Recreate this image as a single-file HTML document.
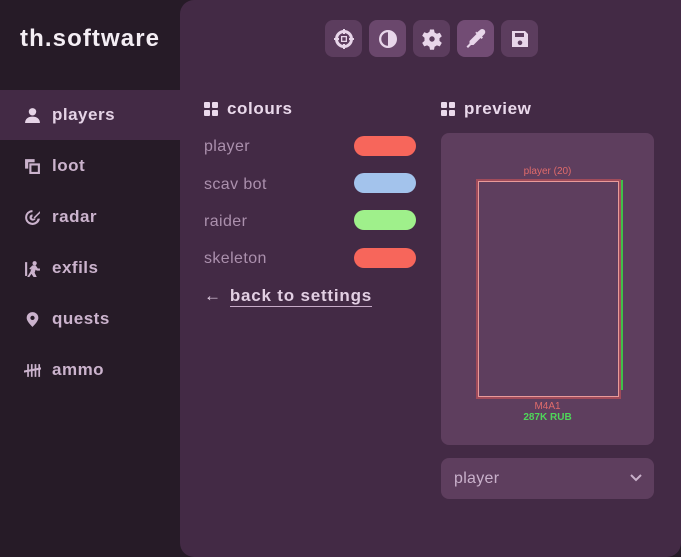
<!DOCTYPE html>
<html><head><style>
*{margin:0;padding:0;box-sizing:border-box}
body{width:681px;height:557px;background:#261b27;font-family:"Liberation Sans",sans-serif;position:relative;overflow:hidden}
.logo{position:absolute;left:20px;top:25px;font-size:24px;color:#f4eef4;font-weight:bold;letter-spacing:1.1px}
.nav{position:absolute;left:0;width:180px;height:50px;display:flex;align-items:center;padding-left:24px;color:#cbb3cd;font-size:17px;font-weight:bold;letter-spacing:0.5px}
.nav.sel{background:#432a45;color:#e5d3e6}
.nav svg{width:17px;height:17px;margin-right:11px;fill:currentColor}
.main{position:absolute;left:180px;top:0;width:501px;height:557px;background:#432a45;border-radius:14px 0 14px 14px}
.tb{position:absolute;top:20px;width:37px;height:37px;border-radius:8px;background:#5c3d5e;display:flex;align-items:center;justify-content:center}
.tb svg{width:22px;height:22px;fill:#e8d6ea}
.h{position:absolute;font-size:17px;font-weight:bold;color:#ead9eb;display:flex;align-items:center;letter-spacing:0.6px}
.h i{display:grid;grid-template-columns:6px 6px;gap:2px;margin-right:9px}
.h i b{width:6px;height:6px;background:#ead9eb;border-radius:1px}
.lbl{position:absolute;left:204px;font-size:16px;color:#ab90ad;letter-spacing:0.4px}
.sw{position:absolute;left:354px;width:62px;height:20px;border-radius:10px}
.prev{position:absolute;left:441px;top:133px;width:213px;height:312px;background:#5e3e5e;border-radius:8px}
.sel2{position:absolute;left:441px;top:458px;width:213px;height:41px;background:#5e3e5e;border-radius:8px;color:#c9b1cb;font-size:16px;padding:12px 0 0 13px;letter-spacing:0.3px}
</style></head><body>
<div class="logo">th.software</div>
<div class="nav sel" style="top:90px"><svg viewBox="0 0 16 16"><circle cx="8" cy="4.5" r="3.5"/><path d="M1 15c0-4 3-6 7-6s7 2 7 6z"/></svg>players</div>
<div class="nav" style="top:141px"><svg viewBox="0 0 16 16"><path d="M1 1h9v3H4v6H1z"/><path d="M5 5h10v10H5zM7 7v6h6V7z"/></svg>loot</div>
<div class="nav" style="top:192px"><svg viewBox="0 0 16 16"><path d="M8 1a7 7 0 1 0 7 8h-2.2A5 5 0 1 1 8 3zM8 5a3 3 0 1 0 3 4H8.8A1 1 0 1 1 8 7z"/><path d="M9 8l6-6v2l-5 5z"/></svg>radar</div>
<div class="nav" style="top:243px"><svg viewBox="0 0 16 16"><path d="M1 2h2v13H1z"/><circle cx="10" cy="3" r="2"/><path d="M5 8l3-3h3l2 3 2 0v2h-3l-1-1-1 3 2 4H9l-2-3-2 3H3l3-5 1-3-1 1z"/></svg>exfils</div>
<div class="nav" style="top:294px"><svg viewBox="0 0 16 16"><path d="M8 1a5.5 5.5 0 0 0-5.5 5.5C2.5 10 8 15 8 15s5.5-5 5.5-8.5A5.5 5.5 0 0 0 8 1zm0 7.5a2 2 0 1 1 0-4 2 2 0 0 1 0 4z"/></svg>quests</div>
<div class="nav" style="top:345px"><svg viewBox="0 0 16 16"><path d="M3 2h1.6v12H3zM6.5 2h1.6v12H6.5zM10 2h1.6v12H10zM13.5 2h1.6v12h-1.6z"/><path d="M0 8l16-3v2L0 10z"/></svg>ammo</div>
<div class="main"></div>
<div class="tb" style="left:325px"><svg viewBox="0 0 22 22"><path d="M11 2a9 9 0 1 0 0 18 9 9 0 0 0 0-18zm0 3a6 6 0 1 1 0 12 6 6 0 0 1 0-12z"/><path d="M10 1h2v5h-2zM10 16h2v5h-2zM1 10h5v2H1zM16 10h5v2h-5z"/><path d="M8 8h6v1.3H8zM8 12.7h6V14H8zM8 8h1.3v6H8zM12.7 8H14v6h-1.3z"/></svg></div>
<div class="tb" style="left:369px;background:#6a476c"><svg viewBox="0 0 22 22"><path d="M11 2a9 9 0 1 0 0 18 9 9 0 0 0 0-18zm0 2.3v13.4a6.7 6.7 0 0 1 0-13.4z"/></svg></div>
<div class="tb" style="left:413px"><svg viewBox="0 0 22 22"><path d="M9 1.5h4l.6 3 2.3 1.3 2.9-1 2 3.5-2.3 2v2.6l2.3 2-2 3.5-2.9-1-2.3 1.3-.6 3H9l-.6-3-2.3-1.3-2.9 1-2-3.5 2.3-2V9.7L1.2 7.7l2-3.5 2.9 1 2.3-1.3zM11 8.3a2.7 2.7 0 1 0 0 5.4 2.7 2.7 0 0 0 0-5.4z"/></svg></div>
<div class="tb" style="left:457px;background:#724c74"><svg viewBox="0 0 22 22"><path d="M15 2a3 3 0 0 1 4.5 4l-2.5 2.5 1 1-1.5 1.5-1-1-7 7H6l-3 3-1.5-1.5 3-3V13l7-7-1-1L11 3.5l1 1z"/></svg></div>
<div class="tb" style="left:501px"><svg viewBox="0 0 22 22"><path d="M3 3h13l3 3v13H3zm3 2v4h9V5zm5 7.5a2.3 2.3 0 1 0 0 4.6 2.3 2.3 0 0 0 0-4.6z"/></svg></div>
<div class="h" style="left:204px;top:99px"><i><b></b><b></b><b></b><b></b></i>colours</div>
<div class="h" style="left:441px;top:99px"><i><b></b><b></b><b></b><b></b></i>preview</div>
<div class="lbl" style="top:138px">player</div>
<div class="lbl" style="top:176px">scav bot</div>
<div class="lbl" style="top:213px">raider</div>
<div class="lbl" style="top:250px">skeleton</div>
<div class="sw" style="top:136px;background:#f7665b"></div>
<div class="sw" style="top:173px;background:#a3c3ec"></div>
<div class="sw" style="top:210px;background:#9ff08b"></div>
<div class="sw" style="top:248px;background:#f7665b"></div>
<div style="position:absolute;left:204px;top:286px;font-size:17px;font-weight:bold;color:#e2cfe3;letter-spacing:0.8px"><span style="margin-right:8px">&larr;</span><span style="border-bottom:1.5px solid #c7abc8;padding-bottom:1px">back to settings</span></div>
<div class="prev"></div>
<div style="position:absolute;left:476px;top:179px;width:145px;height:220px;border:2px solid #a14b5a;outline:1px solid #e99a9a;outline-offset:-3px"></div>
<div style="position:absolute;left:621px;top:180px;width:2px;height:210px;background:#3fbf4a"></div>
<div style="position:absolute;left:441px;top:166px;width:213px;text-align:center;font-size:10px;color:#e06b6b">player (20)</div>
<div style="position:absolute;left:441px;top:402px;width:213px;text-align:center;font-size:10px;color:#e06b6b;line-height:10px">M4A1</div>
<div style="position:absolute;left:441px;top:412px;width:213px;text-align:center;font-size:10px;color:#4fd65a;font-weight:bold;line-height:11px">287K RUB</div>
<div class="sel2">player<svg style="position:absolute;right:12px;top:16px" width="12" height="8" viewBox="0 0 12 8"><path d="M1 1l5 5 5-5" stroke="#c9b1cb" stroke-width="2" fill="none"/></svg></div>
</body></html>
